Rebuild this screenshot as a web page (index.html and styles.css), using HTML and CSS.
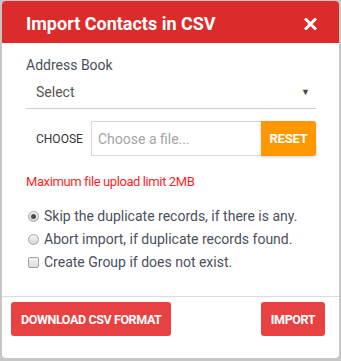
FILE: index.html
```html
<!DOCTYPE html>
<html>
<head>
<meta charset="utf-8">
<link rel="stylesheet" href="styles.css">
</head>
<body>
<div class="modal">
  <div class="modal-header">
    <span class="title">Import Contacts in CSV</span>
    <svg class="close" width="13" height="12" viewBox="0 0 13 12"><path d="M2 1.5 L11 10.5 M11 1.5 L2 10.5" stroke="#fff" stroke-width="3" stroke-linecap="square" fill="none"/></svg>
  </div>
  <div class="modal-body">
    <div class="label">Address Book</div>
    <div class="select">
      <span>Select</span>
      <span class="caret">&#x25BC;</span>
    </div>
    <div class="choose-row">
      <span class="choose-label">CHOOSE</span>
      <div class="file-input">Choose a file...</div>
      <button class="reset">RESET</button>
    </div>
    <div class="limit">Maximum file upload limit 2MB</div>
    <div class="options">
      <label class="opt"><input class="radio" type="radio" name="dup" checked> Skip the duplicate records, if there is any.</label>
      <label class="opt"><input class="radio" type="radio" name="dup"> Abort import, if duplicate records found.</label>
      <label class="opt"><input class="check" type="checkbox"> Create Group if does not exist.</label>
    </div>
  </div>
  <div class="modal-footer">
    <button class="btn">DOWNLOAD CSV FORMAT</button>
    <button class="btn btn-import">IMPORT</button>
  </div>
</div>
</body>
</html>
```
FILE: styles.css
```css
html, body {
  margin: 0;
  padding: 0;
  background: #c6c6c6;
  font-family: Roboto, "Liberation Sans", sans-serif;
}
body {
  padding: 1px 2px 3px 2px;
  height: 361px;
  box-sizing: border-box;
}
.modal {
  background: #fff;
  border-radius: 4px;
  overflow: hidden;
  height: 357px;
  display: flex;
  flex-direction: column;
}
.modal-header {
  background: #dc2b2b;
  height: 42px;
  box-sizing: border-box;
  padding: 3px 22px 0 24px;
  display: flex;
  align-items: center;
  justify-content: space-between;
  color: #fff;
}
.title {
  font-size: 18px;
  font-weight: 700;
}
.close {
  display: block;
  margin-top: 1px;
}
.modal-body {
  padding: 12px 23px 20px 24px;
  color: #4a4f5c;
}
.label {
  font-size: 14px;
  line-height: 20px;
}
.select {
  display: flex;
  justify-content: space-between;
  align-items: center;
  height: 34px;
  box-sizing: border-box;
  padding: 1px 6px 0 10px;
  border-bottom: 1px solid #cfcfcf;
  font-size: 14px;
  color: #555;
}
.caret {
  font-size: 9px;
  color: #444;
}
.choose-row {
  display: flex;
  align-items: stretch;
  margin-top: 12px;
  height: 35px;
}
.choose-label {
  font-size: 12px;
  color: #333;
  align-self: center;
  padding-left: 10px;
  width: 55px;
}
.file-input {
  flex: 1;
  border: 1px solid #d9d9d9;
  border-right: none;
  display: flex;
  align-items: center;
  padding-left: 6px;
  font-size: 14px;
  color: #a5a5a5;
}
.reset {
  width: 55px;
  background: #ff9800;
  color: #fff;
  border: none;
  border-radius: 0 3px 3px 0;
  font-family: inherit;
  font-size: 13px;
  font-weight: 700;
  letter-spacing: -0.2px;
  box-shadow: 0 1px 3px rgba(0,0,0,0.2);
  padding: 0;
}
.limit {
  margin-top: 16px;
  font-size: 13px;
  letter-spacing: -0.4px;
  line-height: 20px;
  color: #ff1f1f;
}
.options {
  margin-top: 13px;
  display: flex;
  flex-direction: column;
}
.opt {
  font-size: 14px;
  line-height: 23px;
  height: 23px;
  display: flex;
  align-items: center;
  gap: 5px;
}
.radio {
  appearance: none;
  -webkit-appearance: none;
  margin: 0 0 0 2px;
  width: 11px;
  height: 11px;
  border-radius: 50%;
  border: 1px solid #a3a3a3;
  background: linear-gradient(#f4f4f4, #d8d8d8);
  display: grid;
  place-items: center;
}
.radio:checked::after {
  content: "";
  width: 5px;
  height: 5px;
  border-radius: 50%;
  background: #4d4d4d;
}
.check {
  appearance: none;
  -webkit-appearance: none;
  margin: 0 0 0 2px;
  width: 11px;
  height: 11px;
  border-radius: 2px;
  border: 1px solid #a3a3a3;
  background: linear-gradient(#f4f4f4, #dcdcdc);
}
.modal-footer {
  border-top: 1px solid #dcdcdc;
  margin-top: auto;
  padding: 5px 14px 22px 9px;
  display: flex;
  justify-content: space-between;
}
.btn {
  background: #e84141;
  color: #fff;
  border: none;
  border-radius: 3px;
  height: 34px;
  padding: 0 10px;
  font-family: inherit;
  font-size: 12.5px;
  letter-spacing: -0.4px;
  font-weight: 700;
}
.btn-import {
  width: 64px;
  padding: 0;
}
```
